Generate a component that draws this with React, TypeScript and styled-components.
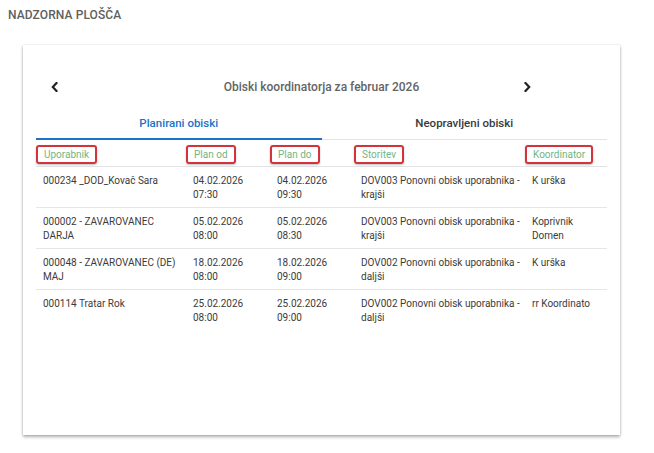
import React from "react";
import styled, { createGlobalStyle } from "styled-components";

const GlobalStyle = createGlobalStyle`
  html, body { margin: 0; padding: 0; background: #ffffff; }
  body { font-family: Roboto, "Noto Sans", Arial, sans-serif; color: #333; }
  * { box-sizing: border-box; }
`;

const Page = styled.div`
  padding: 8px 0 0 8px;
  width: 654px;
  height: 453px;
`;

const PageTitle = styled.div`
  font-size: 12px;
  font-weight: 500;
  line-height: 14px;
  color: #5f5f5f;
  letter-spacing: 0.1px;
`;

const Card = styled.div`
  margin: 23px 0 0 15px;
  width: 597px;
  height: 390px;
  background: #fff;
  box-shadow: 0 2px 3px rgba(0, 0, 0, 0.3), 0 0 2px rgba(0, 0, 0, 0.14);
  padding: 30px 13px 0 13px;
`;

const NavRow = styled.div`
  display: grid;
  grid-template-columns: 1fr auto 1fr;
  align-items: center;
  height: 24px;
`;

const ArrowButton = styled.button<{ $offset: number }>`
  justify-self: start;
  margin-left: ${(p) => p.$offset}px;
  border: none;
  background: none;
  padding: 0;
  width: 10px;
  height: 12px;
  display: flex;
  align-items: center;
  justify-content: center;
  cursor: pointer;
`;

const Title = styled.div`
  font-size: 12px;
  font-weight: 500;
  color: #646464;
  white-space: nowrap;
`;

const Tabs = styled.div`
  display: grid;
  grid-template-columns: 1fr 1fr;
  margin-top: 7px;
  border-bottom: 1px solid #e3e3e3;
`;

const Tab = styled.div<{ $active?: boolean }>`
  height: 34px;
  display: flex;
  align-items: center;
  justify-content: center;
  font-size: 11.5px;
  font-weight: 500;
  color: ${(p) => (p.$active ? "#1a73c8" : "#3a3a3a")};
  border-bottom: 2px solid ${(p) => (p.$active ? "#1a73c8" : "transparent")};
  margin-bottom: -1px;
  padding-top: 2px;
`;

const COLS = "150px 84px 84px 171px 82px";

const HeaderRow = styled.div`
  display: grid;
  grid-template-columns: ${COLS};
  border-bottom: 1px solid #e3e3e3;
  height: 27px;
  align-items: start;
  padding-top: 3px;
`;

const HeaderCell = styled.div`
  padding-left: 0;
`;

const HeaderLabel = styled.span`
  display: inline-block;
  font-size: 10px;
  line-height: 15px;
  color: #72b583;
  border: 2px solid #d3333b;
  border-radius: 3px;
  padding: 0 6px;
  box-shadow: 0 1px 2px rgba(0, 0, 0, 0.25);
`;

const Row = styled.div<{ $last?: boolean }>`
  display: grid;
  grid-template-columns: ${COLS};
  height: 41px;
  border-bottom: ${(p) => (p.$last ? "none" : "1px solid #e6e6e6")};
`;

const Cell = styled.div<{ $padRight?: number }>`
  padding: 7px ${(p) => p.$padRight ?? 8}px 0 7px;
  font-size: 10px;
  line-height: 13.5px;
  color: #3b3b3b;
`;

const Chevron = ({ dir }: { dir: "left" | "right" }) => (
  <svg width="7" height="10" viewBox="0 0 7 10">
    <path
      d={dir === "left" ? "M5.5 1 L1.8 5 L5.5 9" : "M1.5 1 L5.2 5 L1.5 9"}
      fill="none"
      stroke="#222"
      strokeWidth="2.2"
      strokeLinecap="square"
    />
  </svg>
);

const rows = [
  ["000234 _DOD_Kovač Sara", "04.02.2026 07:30", "04.02.2026 09:30", "DOV003 Ponovni obisk uporabnika - krajši", "K urška"],
  ["000002 - ZAVAROVANEC DARJA", "05.02.2026 08:00", "05.02.2026 08:30", "DOV003 Ponovni obisk uporabnika - krajši", "Koprivnik Domen"],
  ["000048 - ZAVAROVANEC (DE) MAJ", "18.02.2026 08:00", "18.02.2026 09:00", "DOV002 Ponovni obisk uporabnika - daljši", "K urška"],
  ["000114 Tratar Rok", "25.02.2026 08:00", "25.02.2026 09:00", "DOV002 Ponovni obisk uporabnika - daljši", "rr Koordinato"],
];

const headers = ["Uporabnik", "Plan od", "Plan do", "Storitev", "Koordinator"];

export default function App() {
  return (
    <Page>
      <GlobalStyle />
      <PageTitle>NADZORNA PLOŠČA</PageTitle>
      <Card>
        <NavRow>
          <ArrowButton $offset={13}>
            <Chevron dir="left" />
          </ArrowButton>
          <Title>Obiski koordinatorja za februar 2026</Title>
          <ArrowButton $offset={103}>
            <Chevron dir="right" />
          </ArrowButton>
        </NavRow>
        <Tabs>
          <Tab $active>Planirani obiski</Tab>
          <Tab>Neopravljeni obiski</Tab>
        </Tabs>
        <HeaderRow>
          {headers.map((h) => (
            <HeaderCell key={h}>
              <HeaderLabel>{h}</HeaderLabel>
            </HeaderCell>
          ))}
        </HeaderRow>
        {rows.map((r, i) => (
          <Row key={i} $last={i === rows.length - 1}>
            <Cell $padRight={4}>{r[0]}</Cell>
            <Cell>{r[1]}</Cell>
            <Cell>{r[2]}</Cell>
            <Cell $padRight={1}>{r[3]}</Cell>
            <Cell>{r[4]}</Cell>
          </Row>
        ))}
      </Card>
    </Page>
  );
}
